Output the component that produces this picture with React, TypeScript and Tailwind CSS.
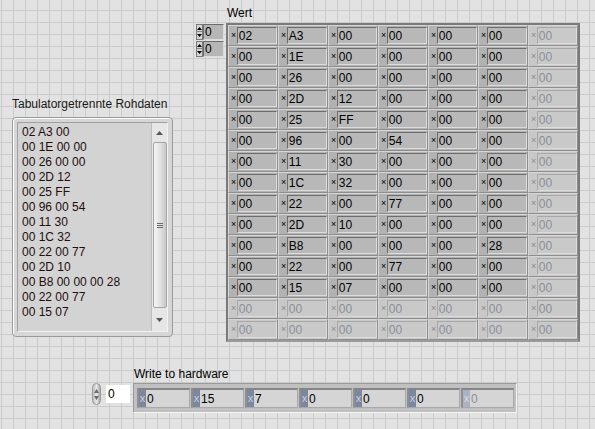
import React from "react";

const font: React.CSSProperties = { fontFamily: "'Liberation Sans', Arial, sans-serif" };

const ROWS: string[][] = [
  ["02", "A3", "00", "00", "00", "00"],
  ["00", "1E", "00", "00", "00", "00"],
  ["00", "26", "00", "00", "00", "00"],
  ["00", "2D", "12", "00", "00", "00"],
  ["00", "25", "FF", "00", "00", "00"],
  ["00", "96", "00", "54", "00", "00"],
  ["00", "11", "30", "00", "00", "00"],
  ["00", "1C", "32", "00", "00", "00"],
  ["00", "22", "00", "77", "00", "00"],
  ["00", "2D", "10", "00", "00", "00"],
  ["00", "B8", "00", "00", "00", "28"],
  ["00", "22", "00", "77", "00", "00"],
  ["00", "15", "07", "00", "00", "00"],
];

const LINES = [
  "02 A3 00",
  "00 1E 00 00",
  "00 26 00 00",
  "00 2D 12",
  "00 25 FF",
  "00 96 00 54",
  "00 11 30",
  "00 1C 32",
  "00 22 00 77",
  "00 2D 10",
  "00 B8 00 00 00 28",
  "00 22 00 77",
  "00 15 07",
];

const HW = ["0", "15", "7", "0", "0", "0"];

function HexCell({ v, off }: { v: string; off: boolean }) {
  return (
    <div
      className={`w-[50px] h-[21px] flex items-center pl-[2px] border border-t-[#d6d6d6] border-l-[#d6d6d6] border-r-[#8e8e8e] border-b-[#8e8e8e] ${off ? "bg-[#c8c8c8]" : "bg-[#b2b2b2]"}`}
    >
      <span className={`text-[9px] leading-none w-[6px] ${off ? "text-[#8a8a8a]" : "text-black"}`}>×</span>
      <div
        className={`w-[41px] h-[17px] flex items-center pl-[1px] text-[12px] leading-none border border-t-[#6c6c6c] border-l-[#6c6c6c] border-r-[#dcdcdc] border-b-[#dcdcdc] ${off ? "bg-[#c9c9c9] text-[#8a8f99] border-t-[#a8a8a8] border-l-[#a8a8a8]" : "bg-[#b8b8b8] text-black"}`}
      >
        {v}
      </div>
    </div>
  );
}

function IndexBox() {
  return (
    <div className="flex h-[16px]">
      <div className="w-[7px] h-[16px] flex flex-col border border-[#7a7a7a] bg-[#d4d4d4]">
        <div className="h-[7px] flex items-center justify-center border-b border-[#8a8a8a]">
          <svg width="5" height="3" viewBox="0 0 5 3"><path d="M2.5 0L5 3H0z" fill="#000" /></svg>
        </div>
        <div className="flex-1 flex items-center justify-center">
          <svg width="5" height="3" viewBox="0 0 5 3"><path d="M0 0h5L2.5 3z" fill="#000" /></svg>
        </div>
      </div>
      <div className="w-[21px] h-[16px] flex items-center pl-[1px] text-[12px] leading-none bg-[#b6b6b6] border border-t-[#6c6c6c] border-l-[#6c6c6c] border-r-[#dcdcdc] border-b-[#dcdcdc]">
        0
      </div>
    </div>
  );
}

function HwCell({ v, off }: { v: string; off?: boolean }) {
  return (
    <div className="w-[53px] h-[20px] flex border-t-2 border-l-2 border-t-[#858585] border-l-[#8f8f8f] border-r border-b border-r-[#a9a9a9] border-b-[#a9a9a9] bg-[#d5d5d5]">
      <div
        className={`w-[7px] h-full flex items-center justify-center text-[11px] leading-none ${off ? "bg-[#a9b2c3] text-[#d8dde6]" : "bg-[#7b87a0] text-[#c9d0de]"}`}
      >
        x
      </div>
      <div className={`pl-[1px] flex items-center text-[12px] leading-none ${off ? "text-[#8a8f99]" : "text-black"}`}>{v}</div>
    </div>
  );
}

export default function App() {
  return (
    <div
      className="w-[595px] h-[429px] overflow-hidden bg-[#e2e2e2] bg-[image:linear-gradient(to_right,#cbcbcb_1px,transparent_1px),linear-gradient(to_bottom,#cbcbcb_1px,transparent_1px)] bg-[size:12px_12px] bg-[position:1px_10px] text-black"
      style={font}
    >
      <div className="flex items-start h-[342px]">
        {/* text display */}
        <div className="ml-[12px] mt-[98px] flex flex-col">
          <div className="text-[12px] leading-[13px] text-[#1a1a1a] mb-[6px]">Tabulatorgetrennte Rohdaten</div>
          <div className="w-[161px] h-[220px] rounded-[4px] bg-[#d6d6d6] border border-[#9a9a9a] p-[4px] shadow-[inset_1px_1px_0_#ffffff]">
            <div className="w-full h-full flex bg-[#d3d3d3] border border-t-[#a0a0a0] border-l-[#a0a0a0] border-r-[#f2f2f2] border-b-[#f2f2f2]">
              <div className="flex-1 pl-[4px] pt-[2px] flex flex-col text-[12px] leading-[15px] text-[#240d0d]">
                {LINES.map((l, i) => (
                  <div key={i} className="whitespace-pre">{l}</div>
                ))}
              </div>
              <div className="w-[16px] h-full flex flex-col items-center bg-[#e6e6e6] border-l border-[#bdbdbd]">
                <div className="h-[19px] flex items-center justify-center">
                  <svg width="7" height="4" viewBox="0 0 7 4"><path d="M3.5 0L7 4H0z" fill="#555" /></svg>
                </div>
                <div className="w-[14px] h-[166px] rounded-[2px] border border-[#a6a6a6] bg-[linear-gradient(to_right,#f4f4f4,#dedede_60%,#c6c6c6)] flex items-center justify-center">
                  <div className="flex flex-col gap-[1px]">
                    <div className="w-[6px] h-[1px] bg-[#6a6a6a]" />
                    <div className="w-[6px] h-[1px] bg-[#6a6a6a]" />
                    <div className="w-[6px] h-[1px] bg-[#6a6a6a]" />
                  </div>
                </div>
                <div className="flex-1 flex items-center justify-center">
                  <svg width="7" height="4" viewBox="0 0 7 4"><path d="M0 0h7L3.5 4z" fill="#555" /></svg>
                </div>
              </div>
            </div>
          </div>
        </div>

        {/* array Wert */}
        <div className="ml-[22px] mt-[7px] flex flex-col">
          <div className="ml-[32px] text-[12px] leading-[13px] mb-[3px]">Wert</div>
          <div className="flex items-start">
            <div className="mt-[1px] ml-[1px] flex flex-col gap-[1px]">
              <IndexBox />
              <IndexBox />
            </div>
            <div className="ml-[2px] border-2 border-[#7a7a7a] border-b-[#9a9a9a] bg-[#9a9a9a] grid grid-cols-7">
              {Array.from({ length: 15 }).map((_, r) =>
                Array.from({ length: 7 }).map((_, c) => {
                  const off = r >= ROWS.length || c >= 6;
                  const v = off ? "00" : ROWS[r][c];
                  return <HexCell key={`${r}-${c}`} v={v} off={off} />;
                })
              )}
            </div>
          </div>
        </div>
      </div>

      {/* Write to hardware */}
      <div className="flex items-start mt-[26px]">
        <div className="ml-[92px] mt-[15px] flex items-center">
          <div className="w-[9px] h-[22px] rounded-full bg-[linear-gradient(to_right,#bdbdbd,#e8e8e8,#a8a8a8)] border border-[#9a9a9a] flex flex-col items-center justify-center gap-[3px]">
            <svg width="5" height="4" viewBox="0 0 5 4"><path d="M2.5 0L5 4H0z" fill="#6a6a6a" /></svg>
            <svg width="5" height="4" viewBox="0 0 5 4"><path d="M0 0h5L2.5 4z" fill="#6a6a6a" /></svg>
          </div>
          <div className="ml-[5px] w-[24px] h-[18px] bg-white flex items-center pl-[2px] text-[12px] leading-none">0</div>
        </div>
        <div className="ml-[3px] flex flex-col">
          <div className="ml-[1px] text-[12px] leading-[13px] mb-[2px]">Write to hardware</div>
          <div className="w-[384px] h-[30px] flex items-center gap-[1px] pl-[3px] bg-[#c0c0c0] border border-t-[#9a9a9a] border-l-[#9a9a9a] border-r-[#f4f4f4] border-b-[#f4f4f4]">
            {HW.map((v, i) => (
              <HwCell key={i} v={v} />
            ))}
            <HwCell v="0" off />
          </div>
        </div>
      </div>
    </div>
  );
}
